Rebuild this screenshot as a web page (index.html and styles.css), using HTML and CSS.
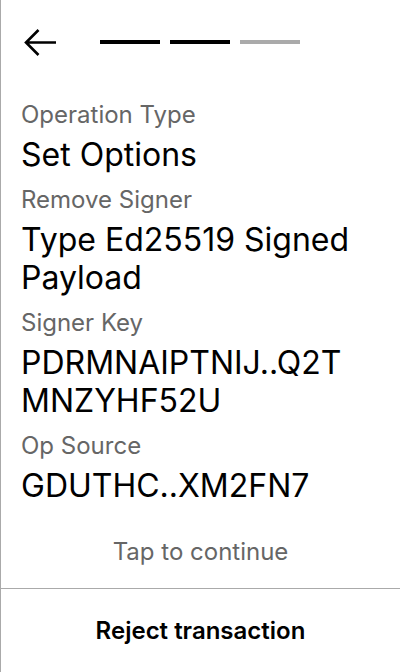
FILE: index.html
```html
<!DOCTYPE html>
<html>
<head>
<meta charset="utf-8">
<link rel="stylesheet" href="styles.css">
</head>
<body>
<div class="screen">
  <div class="header">
    <svg class="back" width="34" height="30" viewBox="0 0 34 30">
      <path d="M34 14.5 H4 M16.5 2 L4 14.5 L16.5 27" fill="none" stroke="#000" stroke-width="2.6"/>
    </svg>
    <div class="steps">
      <span class="step done"></span>
      <span class="step done"></span>
      <span class="step"></span>
    </div>
  </div>
  <div class="content">
    <div class="label">Operation Type</div>
    <div class="value">Set Options</div>
    <div class="label">Remove Signer</div>
    <div class="value">Type Ed25519 Signed Payload</div>
    <div class="label">Signer Key</div>
    <div class="value">PDRMNAIPTNIJ..Q2T MNZYHF52U</div>
    <div class="label">Op Source</div>
    <div class="value">GDUTHC..XM2FN7</div>
  </div>
  <div class="tap">Tap to continue</div>
  <div class="footer">Reject transaction</div>
</div>
</body>
</html>
```
FILE: styles.css
```css
html, body {
  margin: 0;
  padding: 0;
  background: #fff;
}
body {
  font-family: Inter, "Noto Sans", sans-serif;
  color: #000;
}
.screen {
  width: 399px;
  height: 672px;
  border-left: 1px solid #aaa;
  display: flex;
  flex-direction: column;
}
.header {
  display: flex;
  align-items: center;
  height: 30px;
  padding: 28px 0 0 21px;
}
.back {
  display: block;
}
.steps {
  display: flex;
  gap: 10px;
  margin-left: 44px;
  margin-top: -2px;
}
.step {
  display: block;
  width: 60px;
  height: 4px;
  background: #aaa;
}
.step.done {
  background: #000;
}
.content {
  padding: 43px 20px 0 20px;
}
.label {
  font-size: 24px;
  line-height: 28px;
  color: #666;
  margin-bottom: 7px;
}
.value {
  font-size: 32px;
  line-height: 38px;
  color: #000;
  margin-bottom: 12px;
}
.tap {
  text-align: center;
  font-size: 24px;
  line-height: 28px;
  color: #666;
  margin-top: 21px;
}
.footer {
  margin-top: auto;
  border-top: 1px solid #aaa;
  height: 83px;
  display: flex;
  align-items: center;
  justify-content: center;
  font-size: 24px;
  font-weight: 600;
}
```
